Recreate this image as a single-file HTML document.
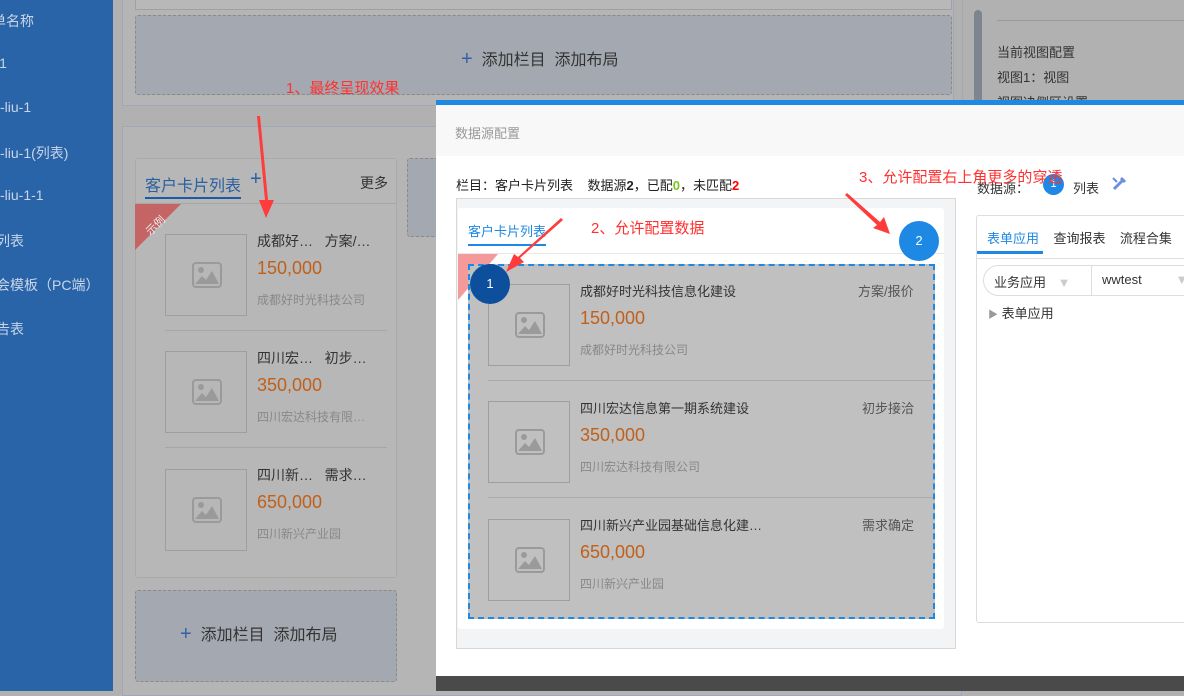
<!DOCTYPE html>
<html><head><meta charset="utf-8"><style>
*{margin:0;padding:0;box-sizing:border-box}
body{width:1184px;height:691px;position:relative;overflow:hidden;background:#b1b1b1;font-family:"Liberation Sans","Noto Sans CJK SC",sans-serif;font-size:14px;color:#333}
.a{position:absolute}
.side{left:0;top:0;width:113px;height:691px;background:#2963a8;color:#c9d6e8;font-size:14px}
.side div{position:absolute;left:0;white-space:nowrap}
.dash{border:1px dashed #8a8a8a;background:#a4a8b0;border-radius:3px}
.imgb{width:82px;height:82px;border:1px solid #9e9e9e}
.imgb svg{position:absolute;left:26px;top:27px}
.t{white-space:nowrap}
.price{color:#c0601a;font-size:18px}
.co{color:#888;font-size:12px}
.red{color:#ff3030}
</style></head><body>
<div class="a side">
<div style="top:11px;left:-8px">单名称</div>
<div style="top:55px;left:-4px">j1</div>
<div style="top:99px">-liu-1</div>
<div style="top:143px">-liu-1(列表)</div>
<div style="top:187px">-liu-1-1</div>
<div style="top:231px;left:-4px">列表</div>
<div style="top:275px;left:-4px">会模板（PC端）</div>
<div style="top:319px;left:-4px">告表</div>
</div>
<svg width="0" height="0" style="position:absolute"><defs><symbol id="pic" viewBox="0 0 30 26"><rect x="1" y="1" width="28" height="24" rx="3" fill="none" stroke="#9a9a9a" stroke-width="2"/><circle cx="9" cy="8" r="3" fill="#9a9a9a"/><polygon points="3,22 10,14 14,18 20,9 27,22" fill="#9a9a9a"/></symbol></defs></svg>
<!-- main -->
<div class="a" style="left:122px;top:-4px;width:832px;height:110px;border:1px solid #a0a8b8;background:#b5b5b5"></div>
<div class="a" style="left:135px;top:-4px;width:817px;height:14px;border:1px solid #a0a0a0;background:#b8b8b8"></div>
<div class="a dash" style="left:135px;top:15px;width:817px;height:80px"></div>
<div class="a t" style="left:461px;top:46px;font-size:16px;color:#333"><span style="color:#3461a8;font-size:20px">+</span>&nbsp; 添加栏目&nbsp; 添加布局</div>
<div class="a" style="left:122px;top:126px;width:840px;height:570px;border:1px solid #a0a8b8;background:#b5b5b5"></div>
<div class="a dash" style="left:407px;top:158px;width:40px;height:79px"></div>
<div class="a" style="left:135px;top:158px;width:262px;height:420px;background:#b7b7b7;border:1px solid #aaa;border-radius:3px"></div>
<div class="a t" style="left:145px;top:172px;font-size:16px;color:#2a5fa0;border-bottom:2px solid #1a5aa6;padding-bottom:1px">客户卡片列表</div>
<div class="a t" style="left:250px;top:168px;font-size:20px;color:#2a5fa0">+</div>
<div class="a t" style="left:360px;top:173px;font-size:14px">更多</div>
<div class="a" style="left:135px;top:203px;width:262px;height:1px;background:#a6a6a6"></div>
<svg class="a" style="left:135px;top:204px" width="46" height="46"><polygon points="0,0 46,0 0,46" fill="#c46464"/><text x="8" y="30" transform="rotate(-45 14 22)" fill="#eee" font-size="11" font-family="Liberation Sans,Noto Sans CJK SC,sans-serif">示例</text></svg>
<div class="a imgb" style="left:165px;top:234px"><svg width="30" height="26"><use href="#pic"/></svg></div>
<div class="a t" style="left:257px;top:231px">成都好…&nbsp;&nbsp; 方案/…</div>
<div class="a price" style="left:257px;top:258px">150,000</div>
<div class="a co" style="left:257px;top:291px">成都好时光科技公司</div>
<div class="a" style="left:165px;top:330px;width:222px;height:1px;background:#a6a6a6"></div>
<div class="a imgb" style="left:165px;top:351px"><svg width="30" height="26"><use href="#pic"/></svg></div>
<div class="a t" style="left:257px;top:348px">四川宏…&nbsp;&nbsp; 初步…</div>
<div class="a price" style="left:257px;top:375px">350,000</div>
<div class="a co" style="left:257px;top:408px">四川宏达科技有限…</div>
<div class="a" style="left:165px;top:447px;width:222px;height:1px;background:#a6a6a6"></div>
<div class="a imgb" style="left:165px;top:469px"><svg width="30" height="26"><use href="#pic"/></svg></div>
<div class="a t" style="left:257px;top:465px">四川新…&nbsp;&nbsp; 需求…</div>
<div class="a price" style="left:257px;top:492px">650,000</div>
<div class="a co" style="left:257px;top:525px">四川新兴产业园</div>
<div class="a dash" style="left:135px;top:590px;width:262px;height:92px"></div>
<div class="a t" style="left:180px;top:621px;font-size:16px"><span style="color:#3461a8;font-size:20px">+</span>&nbsp; 添加栏目&nbsp; 添加布局</div>
<!-- scrollbar / right -->
<div class="a" style="left:962px;top:0;width:1px;height:100px;background:#a8a8a8"></div>
<div class="a" style="left:974px;top:10px;width:8px;height:95px;background:#7f8590;border-radius:4px"></div>
<div class="a" style="left:997px;top:20px;width:187px;height:1px;background:#999"></div>
<div class="a t" style="left:997px;top:42px;font-size:13px">当前视图配置</div>
<div class="a t" style="left:997px;top:67px;font-size:13px">视图1：视图</div>
<div class="a t" style="left:997px;top:92px;font-size:13px">视图决侧区设置</div>
<div class="a t red" style="left:286px;top:77px;font-size:15px">1、最终呈现效果</div>
<!-- modal -->
<div class="a" style="left:436px;top:100px;width:748px;height:591px;background:#fff"></div>
<div class="a" style="left:436px;top:100px;width:748px;height:5px;background:#1e88e5"></div>
<div class="a" style="left:436px;top:105px;width:748px;height:51px;background:#f8f8f8"></div>
<div class="a t" style="left:455px;top:123px;font-size:13px;color:#999">数据源配置</div>
<div class="a" style="left:436px;top:676px;width:748px;height:15px;background:#4a4a4a"></div>
<div class="a t" style="left:456px;top:175px;font-size:13px;color:#222">栏目：客户卡片列表&nbsp;&nbsp;&nbsp; 数据源<b>2</b>，已配<b style="color:#7cc520">0</b>，未匹配<b style="color:#f00">2</b></div>
<div class="a" style="left:456px;top:198px;width:500px;height:451px;background:#f3f4f5;border:1px solid #d8d8d8"></div>
<div class="a" style="left:458px;top:208px;width:486px;height:421px;background:#fff;border-radius:3px"></div>
<div class="a t" style="left:468px;top:221px;font-size:13px;color:#1e88e5;border-bottom:2px solid #1e88e5;padding-bottom:4px">客户卡片列表</div>
<div class="a" style="left:458px;top:253px;width:486px;height:1px;background:#e8e8e8"></div>
<svg class="a" style="left:458px;top:254px" width="40" height="46"><polygon points="0,0 40,0 0,46" fill="#f59a9a"/></svg>
<div class="a" style="left:468px;top:264px;width:467px;height:355px;background:#c0c0c0;border:2px dashed #1e88e5"></div>
<div class="a imgb" style="left:488px;top:284px"><svg width="30" height="26"><use href="#pic"/></svg></div>
<div class="a t" style="left:580px;top:281px;font-size:13px">成都好时光科技信息化建设</div>
<div class="a t" style="left:858px;top:281px;font-size:13px;color:#555">方案/报价</div>
<div class="a price" style="left:580px;top:308px">150,000</div>
<div class="a co" style="left:580px;top:341px">成都好时光科技公司</div>
<div class="a" style="left:488px;top:380px;width:445px;height:1px;background:#aaa"></div>
<div class="a imgb" style="left:488px;top:401px"><svg width="30" height="26"><use href="#pic"/></svg></div>
<div class="a t" style="left:580px;top:398px;font-size:13px">四川宏达信息第一期系统建设</div>
<div class="a t" style="left:862px;top:398px;font-size:13px;color:#555">初步接洽</div>
<div class="a price" style="left:580px;top:425px">350,000</div>
<div class="a co" style="left:580px;top:458px">四川宏达科技有限公司</div>
<div class="a" style="left:488px;top:497px;width:445px;height:1px;background:#aaa"></div>
<div class="a imgb" style="left:488px;top:519px"><svg width="30" height="26"><use href="#pic"/></svg></div>
<div class="a t" style="left:580px;top:515px;font-size:13px">四川新兴产业园基础信息化建…</div>
<div class="a t" style="left:862px;top:515px;font-size:13px;color:#555">需求确定</div>
<div class="a price" style="left:580px;top:542px">650,000</div>
<div class="a co" style="left:580px;top:575px">四川新兴产业园</div>
<!-- right config -->
<div class="a t" style="left:977px;top:178px;font-size:13px">数据源：</div>
<div class="a" style="left:1043px;top:174px;width:21px;height:21px;border-radius:50%;background:#1e88e5;color:#fff;font-size:11px;text-align:center;line-height:21px">1</div>
<div class="a t" style="left:1073px;top:178px;font-size:13px">列表</div>
<svg class="a" style="left:1111px;top:176px" width="16" height="16"><path d="M3 13 L12 4 M10 2 L14 6" stroke="#6a8fe0" stroke-width="3" fill="none"/><path d="M2 2 L6 6" stroke="#6a8fe0" stroke-width="2"/></svg>
<div class="a" style="left:976px;top:215px;width:220px;height:408px;border:1px solid #ddd;border-radius:3px"></div>
<div class="a t" style="left:987px;top:228px;font-size:13px"><span style="color:#1e88e5">表单应用</span>&nbsp;&nbsp;&nbsp; 查询报表&nbsp;&nbsp;&nbsp; 流程合集</div>
<div class="a" style="left:977px;top:251px;width:66px;height:3px;background:#1e88e5"></div>
<div class="a" style="left:977px;top:258px;width:207px;height:1px;background:#ddd"></div>
<div class="a" style="left:983px;top:265px;width:220px;height:31px;border:1px solid #ddd;border-radius:16px"></div>
<div class="a" style="left:1091px;top:266px;width:1px;height:29px;background:#ddd"></div>
<div class="a t" style="left:994px;top:272px;font-size:13px">业务应用 <span style="color:#ccc;margin-left:8px">▼</span></div>
<div class="a t" style="left:1102px;top:272px;font-size:13px">wwtest <span style="color:#ccc;margin-left:30px">▼</span></div>
<div class="a t" style="left:988px;top:303px;font-size:13px"><span style="color:#999;font-size:10px">▶</span> 表单应用</div>
<!-- annotations -->
<div class="a t red" style="left:591px;top:217px;font-size:15px">2、允许配置数据</div>
<div class="a t red" style="left:859px;top:166px;font-size:15px">3、允许配置右上角更多的穿透</div>
<div class="a" style="left:470px;top:264px;width:40px;height:40px;border-radius:50%;background:#0d4f9c;color:#fff;text-align:center;line-height:40px;font-size:13px">1</div>
<div class="a" style="left:899px;top:221px;width:40px;height:40px;border-radius:50%;background:#1e88e5;color:#fff;text-align:center;line-height:40px;font-size:13px">2</div>
<svg class="a" style="left:0;top:0" width="1184" height="691">
<polygon points="257,116 260,116 268,200 274,200 266,218 259,200 265,200" fill="#ff3b3b"/>
<polygon points="561,218 563,220 520,258 524,262 506,272 514,254 518,257" fill="#ff3b3b"/>
<polygon points="845,195 847,193 880,222 884,217 890,234 873,228 877,225" fill="#ff3b3b"/>
</svg>
</body></html>
